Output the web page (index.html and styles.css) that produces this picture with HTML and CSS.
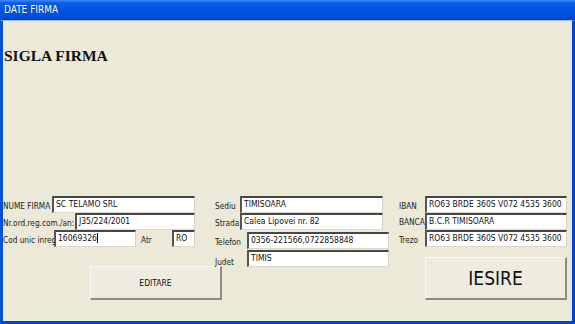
FILE: index.html
```html
<!DOCTYPE html>
<html>
<head>
<meta charset="utf-8">
<link rel="stylesheet" href="styles.css">
</head>
<body>
<div class="window">
  <div class="titlebar">DATE FIRMA</div>
  <div class="client">
    <h1 class="sigla">SIGLA FIRMA</h1>
    <div class="fields">
      <div class="col col1">
        <div class="row"><span class="lbl w49">NUME FIRMA</span><span class="inp w143">SC TELAMO SRL</span></div>
        <div class="row"><span class="lbl w72">Nr.ord.reg.com./an:</span><span class="inp w120">J35/224/2001</span></div>
        <div class="row"><span class="lbl w51">Cod unic inreg</span><span class="inp w82">16069326<span class="caret"></span></span><span class="lbl atr">Atr</span><span class="inp w23">RO</span></div>
        <div class="btn editare">EDITARE</div>
      </div>
      <div class="col col2">
        <div class="row"><span class="lbl w25">Sediu</span><span class="inp w143">TIMISOARA</span></div>
        <div class="row"><span class="lbl w25">Strada</span><span class="inp w143">Calea Lipovei nr. 82</span></div>
        <div class="row r3"><span class="lbl w32">Telefon</span><span class="inp w142">0356-221566,0722858848</span></div>
        <div class="row r4"><span class="lbl w32 judet">Judet</span><span class="inp w142">TIMIS</span></div>
      </div>
      <div class="col col3">
        <div class="row"><span class="lbl w26">IBAN</span><span class="inp w142">RO63 BRDE 360S V072 4535 3600</span></div>
        <div class="row"><span class="lbl w26 banca">BANCA</span><span class="inp w142">B.C.R TIMISOARA</span></div>
        <div class="row"><span class="lbl w26">Trezo</span><span class="inp w142">RO63 BRDE 360S V072 4535 3600</span></div>
        <div class="btn iesire">IESIRE</div>
      </div>
    </div>
  </div>
</div>
</body>
</html>
```

FILE: styles.css
```css
* { box-sizing: border-box; }
html, body { margin: 0; padding: 0; }
body {
  width: 575px;
  height: 324px;
  overflow: hidden;
  background: #ece9d8;
  font-family: "DejaVu Sans Condensed", "DejaVu Sans", sans-serif;
  font-stretch: condensed;
}
.window {
  width: 575px;
  height: 324px;
  display: flex;
  flex-direction: column;
}
.titlebar {
  height: 20px;
  flex: none;
  background: linear-gradient(to bottom, #3d8af2 0px, #0a5ae6 3px, #0055e2 10px, #0050d8 16px, #0045c0 20px);
  color: #fff;
  font-size: 10px;
  line-height: 20px;
  padding-left: 4px;
  text-shadow: 0 0 1px #0030a0;
}
.client {
  flex: 1;
  border-left: 3px solid #0050d8;
  border-right: 3px solid #0046c8;
  border-bottom: 3px solid #0046c8;
  border-top: 1px solid #9cb8e8;
  background: #ece9d8;
}
.sigla {
  margin: 26px 0 0 1px;
  font-family: "Liberation Serif", serif;
  font-weight: bold;
  font-size: 15.5px;
  line-height: 18px;
  color: #111;
  height: 18px;
}
.fields {
  display: flex;
  margin-top: 131px;
}
.col { display: flex; flex-direction: column; }
.col1 { width: 212px; }
.col2 { width: 184px; }
.col3 { flex: 1; }
.row {
  display: flex;
  height: 17px;
  align-items: stretch;
}
.r3 { margin-top: 2px; }
.r4 { margin-top: 1px; }
.lbl {
  font-size: 8.2px;
  color: #222;
  white-space: nowrap;
  overflow: visible;
  display: flex;
  align-items: flex-end;
  padding-bottom: 2px;
  flex: none;
}
.banca { align-items: center; padding-bottom: 0; }
.judet { padding-bottom: 0; }
.inp {
  background: #fff;
  border-top: 2px solid #474747;
  border-left: 2px solid #555;
  border-right: 1px solid #d6d2c4;
  border-bottom: 1px solid #dcd8cc;
  font-size: 8.5px;
  color: #111;
  padding: 1px 0 0 2px;
  line-height: 11px;
  white-space: nowrap;
  overflow: hidden;
  flex: none;
}
.caret {
  display: inline-block;
  width: 1px;
  height: 10px;
  background: #000;
  vertical-align: -2px;
}
.w23 { width: 23px; }
.w25 { width: 25px; }
.w26 { width: 26px; }
.w32 { width: 32px; }
.w49 { width: 49px; }
.w51 { width: 51px; }
.w72 { width: 72px; }
.w82 { width: 82px; }
.w120 { width: 120px; }
.w142 { width: 142px; }
.w143 { width: 143px; }
.atr { width: 36px; padding-left: 5px; }
.btn {
  background: #eeebdf;
  border-top: 1px solid #fbfaf6;
  border-left: 1px solid #fbfaf6;
  border-right: 2px solid #8e8c80;
  border-bottom: 2px solid #8e8c80;
  display: flex;
  align-items: center;
  justify-content: center;
  color: #111;
}
.editare {
  width: 132px;
  height: 34px;
  margin: 19px 0 0 87px;
  font-size: 8.5px;
}
.iesire {
  width: 142px;
  height: 43px;
  margin: 10px 0 0 26px;
  font-size: 19px;
}
```
